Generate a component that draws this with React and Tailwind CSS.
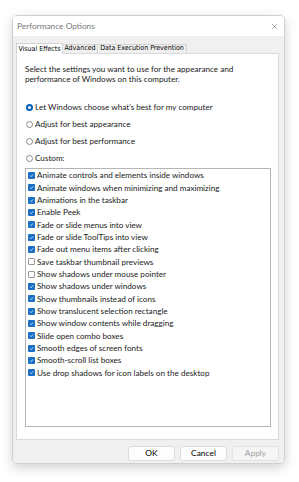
import React from "react";

const items = [
  ["Animate controls and elements inside windows", true],
  ["Animate windows when minimizing and maximizing", true],
  ["Animations in the taskbar", true],
  ["Enable Peek", true],
  ["Fade or slide menus into view", true],
  ["Fade or slide ToolTips into view", true],
  ["Fade out menu items after clicking", true],
  ["Save taskbar thumbnail previews", false],
  ["Show shadows under mouse pointer", false],
  ["Show shadows under windows", true],
  ["Show thumbnails instead of icons", true],
  ["Show translucent selection rectangle", true],
  ["Show window contents while dragging", true],
  ["Slide open combo boxes", true],
  ["Smooth edges of screen fonts", true],
  ["Smooth-scroll list boxes", true],
  ["Use drop shadows for icon labels on the desktop", true],
];

const radios = [
  ["Let Windows choose what\u2019s best for my computer", true],
  ["Adjust for best appearance", false],
  ["Adjust for best performance", false],
  ["Custom:", false],
];

function Radio({ on }) {
  return on ? (
    <span className="w-[7px] h-[7px] rounded-full bg-[#005fb8] flex items-center justify-center shrink-0">
      <span className="w-[3px] h-[3px] rounded-full bg-white" />
    </span>
  ) : (
    <span className="w-[7px] h-[7px] rounded-full border border-[#8a8a8a] bg-white shrink-0" />
  );
}

function Check({ on }) {
  return on ? (
    <span className="w-[7px] h-[7px] rounded-[1px] bg-[#1a6fc4] flex items-center justify-center shrink-0">
      <svg width="5" height="5" viewBox="0 0 10 10">
        <path d="M2 5.2 L4.2 7.4 L8.2 2.6" fill="none" stroke="white" strokeWidth="1.4" />
      </svg>
    </span>
  ) : (
    <span className="w-[7px] h-[7px] rounded-[1px] border border-[#9a9a9a] bg-white shrink-0" />
  );
}

export default function App() {
  return (
    <div
      className="w-[299px] h-[482px] bg-white pt-[15px] pl-[12px]"
      style={{ fontFamily: 'Lato, "Noto Sans", sans-serif' }}
    >
      <div className="w-[273px] h-[449px] rounded-[5px] border border-[#cfcfcf] shadow-[0_4px_12px_rgba(0,0,0,0.18)] overflow-hidden flex flex-col">
        <div className="h-[20px] bg-white flex items-center justify-between pl-[4px] pr-[6px]">
          <span className="text-[8.3px] text-[#777]">Performance Options</span>
          <svg width="7" height="7" viewBox="0 0 10 10">
            <path d="M1 1 L9 9 M9 1 L1 9" stroke="#8a8a8a" strokeWidth="0.9" />
          </svg>
        </div>
        <div className="flex-1 bg-[#f0f0f0] flex flex-col pl-[3px] pr-[5px] pt-[6px]">
          <div
            className="flex items-end h-[10.5px] text-[7px] text-black"
            style={{ fontFamily: '"DejaVu Sans Condensed", "DejaVu Sans", sans-serif' }}
          >
            <div className="h-[10.5px] w-[47px] bg-white border border-b-0 border-[#d4d4d4] flex items-center justify-center relative top-[1px] z-10">
              Visual Effects
            </div>
            <div className="h-[9px] w-[35px] border-t border-r border-[#d4d4d4] flex items-center justify-center">
              Advanced
            </div>
            <div className="h-[9px] w-[89px] border-t border-r border-[#d4d4d4] flex items-center justify-center">
              Data Execution Prevention
            </div>
          </div>
          <div className="h-[387px] bg-white border border-[#d9d9d9] pl-[8px] pt-[10px] text-[8.15px] text-[#1a1a1a]">
            <div className="leading-[10.7px]">
              Select the settings you want to use for the appearance and
              <br />
              performance of Windows on this computer.
            </div>
            <div className="mt-[14px] flex flex-col">
              {radios.map(([t, on]) => (
                <div key={t} className="h-[17px] flex items-center gap-[2.5px] pl-[0.5px]">
                  <Radio on={on} />
                  <span>{t}</span>
                </div>
              ))}
            </div>
            <div className="mt-[1px] w-[246px] h-[259px] border border-[#b5b5b5] bg-white pt-[0.5px] pl-[1.5px]">
              {items.map(([t, on]) => (
                <div key={t} className="h-[12.33px] flex items-center gap-[2.5px]">
                  <Check on={on} />
                  <span className="whitespace-nowrap">{t}</span>
                </div>
              ))}
            </div>
          </div>
          <div className="flex justify-end gap-[5px] mt-[6px] text-[8.4px]">
            <div className="w-[47px] h-[15px] bg-[#fdfdfd] border border-[#dcdcdc] rounded-[3px] flex items-center justify-center text-black">
              OK
            </div>
            <div className="w-[47px] h-[15px] bg-[#fdfdfd] border border-[#dcdcdc] rounded-[3px] flex items-center justify-center text-black">
              Cancel
            </div>
            <div className="w-[47px] h-[15px] bg-[#f5f5f5] border border-[#e3e3e3] rounded-[3px] flex items-center justify-center text-[#a0a0a0]">
              Apply
            </div>
          </div>
        </div>
      </div>
    </div>
  );
}
